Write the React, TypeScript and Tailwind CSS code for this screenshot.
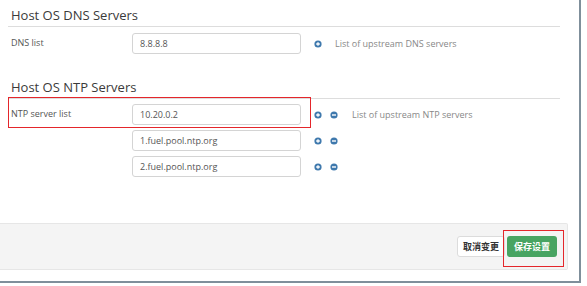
import React from "react";

function PlusIcon() {
  return (
    <svg width="8" height="8" viewBox="0 0 8 8" className="shrink-0">
      <circle cx="4" cy="4" r="3.6" fill="#3f79ad" />
      <path d="M4 2.2V5.8M2.2 4H5.8" stroke="#fff" strokeWidth="1.3" />
    </svg>
  );
}

function MinusIcon() {
  return (
    <svg width="8" height="8" viewBox="0 0 8 8" className="shrink-0">
      <circle cx="4" cy="4" r="3.6" fill="#3f79ad" />
      <path d="M2 4H6" stroke="#fff" strokeWidth="1.4" />
    </svg>
  );
}

function Field({ value }: { value: string }) {
  return (
    <div className="w-[169px] h-[21px] border border-[#d4d4d4] rounded-[3px] bg-white flex items-center pl-[7px] text-[9px] text-[#555]">
      {value}
    </div>
  );
}

export default function App() {
  const font = { fontFamily: '"Open Sans", "Noto Sans CJK SC", sans-serif' };
  return (
    <div className="relative w-[587px] h-[286px] bg-white overflow-hidden" style={font}>
      <div className="w-[581px] h-[283px] border-r-2 border-b-2 border-[#7f8f9b] flex flex-col">
        <div className="pl-[8px] w-[560px]">
          {/* DNS section */}
          <div className="mt-[5px] border-b border-[#dddddd] pb-[1px] pl-[3px] text-[13px] leading-[20px] text-[#3a3a3a]">
            Host OS DNS Servers
          </div>
          <div className="mt-[6px] flex items-start pl-[3px]">
            <div className="w-[121px] text-[9px] leading-[13px] pt-[3px] text-[#555]">DNS list</div>
            <Field value="8.8.8.8" />
            <div className="h-[21px] flex items-center ml-[13px]">
              <PlusIcon />
              <span className="ml-[13px] text-[9px] text-[#888]">List of upstream DNS servers</span>
            </div>
          </div>

          {/* NTP section */}
          <div className="mt-[23px] border-b border-[#dddddd] pb-[1px] pl-[3px] text-[13px] leading-[20px] text-[#3a3a3a]">
            Host OS NTP Servers
          </div>
          <div className="mt-[5px] flex items-start pl-[3px]">
            <div className="w-[121px] text-[9px] leading-[13px] pt-[3px] text-[#555]">NTP server list</div>
            <div className="flex flex-col gap-[5px]">
              {[
                { v: "10.20.0.2", hint: true },
                { v: "1.fuel.pool.ntp.org", hint: false },
                { v: "2.fuel.pool.ntp.org", hint: false },
              ].map((r) => (
                <div key={r.v} className="flex items-start">
                  <Field value={r.v} />
                  <div className="h-[21px] flex items-center ml-[13px] gap-[8px]">
                    <PlusIcon />
                    <MinusIcon />
                    {r.hint && (
                      <span className="ml-[6px] text-[9px] text-[#888]">List of upstream NTP servers</span>
                    )}
                  </div>
                </div>
              ))}
            </div>
          </div>
        </div>

        {/* Footer */}
        <div className="mt-[46px] w-[568px] h-[47px] bg-[#f4f4f4] border border-l-0 border-[#e6e6e6] rounded-r-[2px] flex items-center justify-end pr-[10px] gap-[2px]">
          <div className="h-[21px] w-[48px] bg-white border border-[#dcdcdc] rounded-[3px] flex items-center justify-center text-[9px] text-[#333] font-semibold">
            取消变更
          </div>
          <div className="h-[21px] w-[50px] bg-[#48a462] rounded-[3px] flex items-center justify-center text-[9px] text-white font-semibold">
            保存设置
          </div>
        </div>
      </div>

      {/* annotation overlays */}
      <div className="absolute left-[8px] top-[97px] w-[303px] h-[31px] border-[1.5px] border-[#e4262b]" />
      <div className="absolute left-[503px] top-[230px] w-[61px] h-[37px] border-[1.5px] border-[#e4262b]" />
    </div>
  );
}
